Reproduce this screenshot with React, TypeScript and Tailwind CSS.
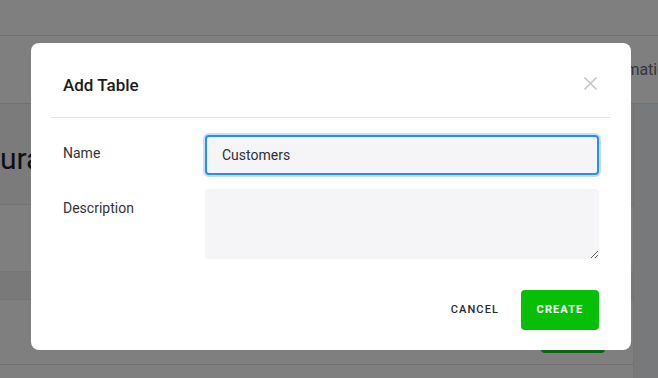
import React from "react";

export default function App() {
  return (
    <div className="relative w-[658px] h-[378px] overflow-hidden bg-white font-['Roboto','Liberation_Sans',sans-serif]">
      {/* underlying page */}
      <div className="flex flex-col h-full">
        <div className="h-[36px] shrink-0 bg-white border-b border-[#e4e4e4]" />
        <div className="h-[68px] shrink-0 bg-white border-b border-[#e0e0e0] flex items-center">
          <span className="ml-[592px] whitespace-nowrap text-[16px] text-[#6b6b80]">Automation</span>
        </div>
        <div className="flex-1 flex bg-[#f1f2f4]">
          <div className="w-[634px] flex flex-col bg-white border-r border-[#e8e8e8]">
            <div className="h-[101px] shrink-0 bg-[#f6f6f7] border-b border-[#e6e6e6] flex items-center">
              <span className="whitespace-nowrap text-[30px] text-[#1f1f2a] leading-none pt-[10px]">uration Tables</span>
            </div>
            <div className="h-[67px] shrink-0 bg-white border-b border-[#ececec]" />
            <div className="h-[28px] shrink-0 bg-[#f3f3f5] border-b border-[#e6e6e6]" />
            <div className="h-[65px] shrink-0 bg-white border-b border-[#dedede] flex justify-end pr-[28px]">
              <div className="mt-[13px] w-[64px] h-[40px] rounded-[4px] bg-[#17c829]" />
            </div>
            <div className="flex-1 bg-white" />
          </div>
          <div className="flex-1" />
        </div>
      </div>

      {/* overlay */}
      <div className="absolute inset-0 bg-black/50" />

      {/* modal */}
      <div className="absolute left-[31px] top-[43px] w-[600px] h-[307px] bg-white rounded-[8px] flex flex-col">
        <div className="h-[74px] shrink-0 flex items-start justify-between pl-8 pr-[34px] pt-[30px]">
          <h2 className="text-[17px] leading-[24px] font-medium text-[#1c1c1c]">Add Table</h2>
          <svg className="mt-[4px]" width="13" height="13" viewBox="0 0 13 13" fill="none">
            <path d="M0.5 0.5L12.5 12.5M12.5 0.5L0.5 12.5" stroke="#c9c9c9" strokeWidth="1.6" />
          </svg>
        </div>
        <div className="mx-5 h-px bg-[#e5e5e5]" />
        <div className="px-8 pt-[17px] flex flex-col">
          <div className="flex">
            <span className="w-[142px] shrink-0 pt-[8px] text-[14px] leading-[20px] text-[#333]">Name</span>
            <div className="flex-1 h-[40px] rounded-[4px] border-2 border-[#2b8bf7] ring-2 ring-[#c5e0fd] bg-[#f5f5f7] flex items-center px-[15px] text-[14px] text-[#2e2e38]">
              Customers
            </div>
          </div>
          <div className="flex mt-[14px]">
            <span className="w-[142px] shrink-0 pt-[9px] text-[14px] leading-[20px] text-[#333]">Description</span>
            <textarea className="flex-1 h-[70px] rounded-[4px] bg-[#f5f5f7] outline-none border-0 resize-y" />
          </div>
          <div className="mt-[31px] flex justify-end items-center">
            <button className="h-[40px] pl-4 pr-[22px] text-[11px] font-medium tracking-[1.1px] text-[#2a2a35]">CANCEL</button>
            <button className="h-[40px] w-[78px] rounded-[4px] bg-[#07bf07] text-white text-[11px] font-bold tracking-[1.1px]">CREATE</button>
          </div>
        </div>
      </div>
    </div>
  );
}
